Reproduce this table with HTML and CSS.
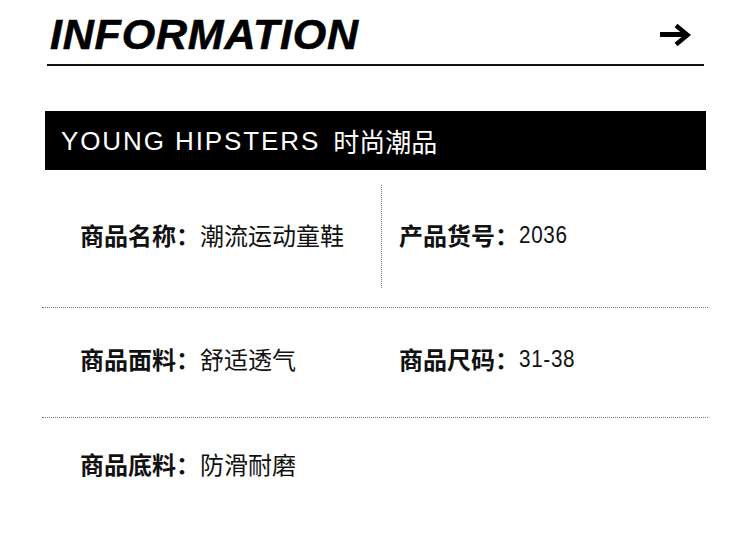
FILE: index.html
```html
<!DOCTYPE html>
<html lang="zh-CN">
<head>
<meta charset="utf-8">
<title>Information</title>
<link rel="stylesheet" href="styles.css">
</head>
<body>
<div class="page">
  <header class="header">
    <h1 class="title">INFORMATION</h1>
    <svg class="arrow" width="32" height="24" viewBox="0 0 32 24" aria-hidden="true">
      <path d="M0 10.5 H26" stroke="#000" stroke-width="5" fill="none"/>
      <path d="M16 1.5 L27.5 11 L16 20.5" stroke="#000" stroke-width="4.5" fill="none" stroke-linejoin="miter"/>
    </svg>
  </header>

  <div class="band">
    <span class="band-en">YOUNG HIPSTERS</span><span class="band-cn">时尚潮品</span>
  </div>

  <div class="info">
    <div class="row row-first">
      <div class="cell cell-left"><span class="label">商品名称：</span><span class="value">潮流运动童鞋</span></div>
      <div class="cell cell-right divided"><span class="label">产品货号：</span><span class="value num">2036</span></div>
    </div>
    <div class="row row-second">
      <div class="cell cell-left"><span class="label">商品面料：</span><span class="value">舒适透气</span></div>
      <div class="cell cell-right"><span class="label">商品尺码：</span><span class="value num">31-38</span></div>
    </div>
    <div class="row row-last">
      <div class="cell cell-left"><span class="label">商品底料：</span><span class="value">防滑耐磨</span></div>
    </div>
  </div>
</div>
</body>
</html>
```

FILE: styles.css
```css
* { box-sizing: border-box; }

html, body {
  margin: 0;
  padding: 0;
  background: #ffffff;
}

body {
  width: 750px;
  height: 558px;
  overflow: hidden;
  font-family: "Noto Sans CJK SC", "Liberation Sans", sans-serif;
  color: #111;
}

.page {
  display: flex;
  flex-direction: column;
}

.header {
  margin: 0 46px 0 47px;
  padding: 10px 12px 6px 3px;
  border-bottom: 2px solid #111;
  display: flex;
  align-items: center;
  justify-content: space-between;
}

.title {
  margin: 0;
  font-family: "Liberation Sans", Arial, sans-serif;
  font-weight: 700;
  font-style: italic;
  font-size: 43px;
  line-height: 48px;
  letter-spacing: 0.8px;
  color: #000;
  -webkit-text-stroke: 0.6px #000;
}

.arrow {
  display: block;
  margin-top: 3px;
}

.band {
  margin: 45px 44px 0 45px;
  height: 59px;
  background: #000;
  color: #fff;
  display: flex;
  align-items: center;
  padding-left: 16px;
  font-size: 26px;
  line-height: 30px;
}

.band-en {
  font-family: "Liberation Sans", Arial, sans-serif;
  letter-spacing: 1.9px;
  margin-right: 13px;
}

.band-cn {
  font-family: "Noto Sans CJK SC", sans-serif;
  letter-spacing: 0;
}

.info {
  margin: 0 42px;
  display: flex;
  flex-direction: column;
}

.row {
  display: grid;
  grid-template-columns: 339px 1fr;
  border-bottom: 1px dotted #808080;
}

.row-first {
  padding: 15px 0 19px;
}

.row-first .cell {
  height: 103px;
  padding-bottom: 4px;
}

.row-second .cell {
  height: 109px;
  padding-bottom: 7px;
}

.row-last {
  border-bottom: none;
}

.row-last .cell {
  height: 94px;
  padding-bottom: 3px;
}

.cell {
  display: flex;
  align-items: center;
  font-size: 24px;
  line-height: 28px;
}

.cell-left {
  padding-left: 38px;
}

.cell-right {
  padding-left: 17px;
  border-left: 1px dotted transparent;
}

.cell-right.divided {
  border-left-color: #808080;
}

.label {
  font-weight: 700;
  color: #111;
}

.value {
  font-weight: 400;
  color: #111;
}

.num {
  display: inline-block;
  font-family: "Liberation Sans", Arial, sans-serif;
  font-size: 24px;
  letter-spacing: 0.8px;
  transform: scaleX(0.86);
  transform-origin: left center;
}
```
